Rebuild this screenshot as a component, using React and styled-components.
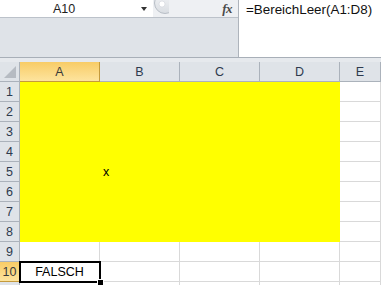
import React from "react";
import styled, { createGlobalStyle } from "styled-components";

const Global = createGlobalStyle`
  html, body { margin: 0; padding: 0; background: #fff; overflow: hidden; }
  body { font-family: "Liberation Sans", Arial, sans-serif; }
`;

const Page = styled.div`
  width: 381px;
  height: 285px;
  overflow: hidden;
  display: flex;
  flex-direction: column;
`;

const TopArea = styled.div`
  display: flex;
  height: 57px;
  flex: none;
`;

const LeftPanel = styled.div`
  width: 238px;
  display: flex;
  flex-direction: column;
  background: #dfe3e8;
  border-right: 1px solid #aeb4bc;
  flex: none;
`;

const NameRow = styled.div`
  height: 17px;
  display: flex;
  align-items: center;
  background: #eef0f3;
  border-bottom: 1px solid #bcc2ca;
`;

const NameBox = styled.div`
  width: 153px;
  height: 17px;
  background: #fff;
  display: flex;
  align-items: center;
  font-size: 12.5px;
  color: #1e1e1e;
  position: relative;
  padding-left: 53px;
  box-sizing: border-box;
`;

const Arrow = styled.span`
  position: absolute;
  left: 141px;
  top: 7px;
  width: 0;
  height: 0;
  border-left: 3.5px solid transparent;
  border-right: 3.5px solid transparent;
  border-top: 4px solid #333;
`;

const Knob = styled.svg`
  width: 16px;
  height: 17px;
  flex: none;
`;

const Fx = styled.span`
  margin-left: auto;
  margin-right: 6px;
  font-family: "Liberation Serif", "Times New Roman", serif;
  font-style: italic;
  font-weight: bold;
  font-size: 13px;
  color: #4a4a4a;
  letter-spacing: -0.5px;
`;

const FormulaArea = styled.div`
  flex: 1;
  background: #fff;
  padding: 2px 0 0 7px;
  font-size: 13.4px;
  line-height: 16px;
  color: #111;
  white-space: nowrap;
`;

const Separator = styled.div`
  height: 4px;
  flex: none;
  border-top: 1px solid #a8afb8;
  background: #e6e9ed;
`;

const Grid = styled.div`
  display: grid;
  grid-template-columns: 20px repeat(4, 80px) 1fr;
  grid-auto-rows: 20px;
  font-size: 12px;
`;

const Cell = styled.div`
  box-sizing: border-box;
  position: relative;
  z-index: ${(p) => (p.$active ? 2 : 0)};
  border-right: 1px solid ${(p) => (p.$fill ? "#ffff00" : "#d9d9d9")};
  border-bottom: 1px solid ${(p) => (p.$fill ? "#ffff00" : "#d9d9d9")};
  background: ${(p) => (p.$fill ? "#ffff00" : "#fff")};
  display: flex;
  align-items: center;
  justify-content: ${(p) => (p.$active ? "center" : "flex-start")};
  padding-left: ${(p) => (p.$active ? "0" : "3px")};
  color: #000;
  font-size: 12.5px;
  white-space: nowrap;
`;

const Head = styled.div`
  box-sizing: border-box;
  position: relative;
  display: flex;
  align-items: center;
  justify-content: center;
  font-size: 12.5px;
  color: ${(p) => (p.$sel ? "#3a3a3a" : "#2e3a4e")};
  background: ${(p) =>
    p.$sel ? "linear-gradient(#f8cc66, #fde49e)" : "#dfe3e8"};
  border-right: 1px solid ${(p) => (p.$sel ? "#c49a3c" : "#abb2bb")};
  border-bottom: 1px solid ${(p) => (p.$sel ? "#c49a3c" : "#abb2bb")};
`;

const Corner = styled(Head)`
  align-items: flex-end;
  justify-content: flex-end;
  padding: 0 3px 3px 0;
`;

const ActiveFrame = styled.div`
  position: absolute;
  left: -1px;
  top: -1px;
  width: 82px;
  height: 22px;
  box-sizing: border-box;
  border: 2px solid #000;
  pointer-events: none;
`;

const FillHandle = styled.div`
  position: absolute;
  right: -5px;
  bottom: -5px;
  width: 5px;
  height: 5px;
  background: #000;
  border: 1px solid #fff;
`;

const cols = ["A", "B", "C", "D", "E"];
const rows = [1, 2, 3, 4, 5, 6, 7, 8, 9, 10, 11];

export default function App() {
  return (
    <Page>
      <Global />
      <TopArea>
        <LeftPanel>
          <NameRow>
            <NameBox>
              A10
              <Arrow />
            </NameBox>
            <Knob viewBox="0 0 16 17">
              <defs>
                <linearGradient id="kg" x1="0" y1="0" x2="0" y2="1">
                  <stop offset="0" stopColor="#f4f5f7" />
                  <stop offset="1" stopColor="#d9dde2" />
                </linearGradient>
              </defs>
              <circle cx="12" cy="3" r="10.5" fill="url(#kg)" stroke="#b8bec6" />
              <circle cx="9" cy="4" r="3" fill="#fff" stroke="#d0d4da" strokeWidth="0.6" />
            </Knob>
            <Fx>fx</Fx>
          </NameRow>
        </LeftPanel>
        <FormulaArea>=BereichLeer(A1:D8)</FormulaArea>
      </TopArea>
      <Separator />
      <Grid>
        <Corner>
          <svg width="12" height="12" viewBox="0 0 12 12">
            <polygon points="12,0 12,12 0,12" fill="#b6bbc2" />
          </svg>
        </Corner>
        {cols.map((c) => (
          <Head key={c} $sel={c === "A"}>
            {c}
          </Head>
        ))}
        {rows.map((r) => (
          <React.Fragment key={r}>
            <Head $sel={r === 10}>{r <= 10 ? r : ""}</Head>
            {cols.map((c, i) => {
              const fill = r <= 8 && i < 4;
              const active = r === 10 && c === "A";
              let text = "";
              if (r === 5 && c === "B") text = "x";
              if (active) text = "FALSCH";
              return (
                <Cell key={c} $fill={fill} $active={active}>
                  {text}
                  {active && (
                    <ActiveFrame>
                      <FillHandle />
                    </ActiveFrame>
                  )}
                </Cell>
              );
            })}
          </React.Fragment>
        ))}
      </Grid>
    </Page>
  );
}
